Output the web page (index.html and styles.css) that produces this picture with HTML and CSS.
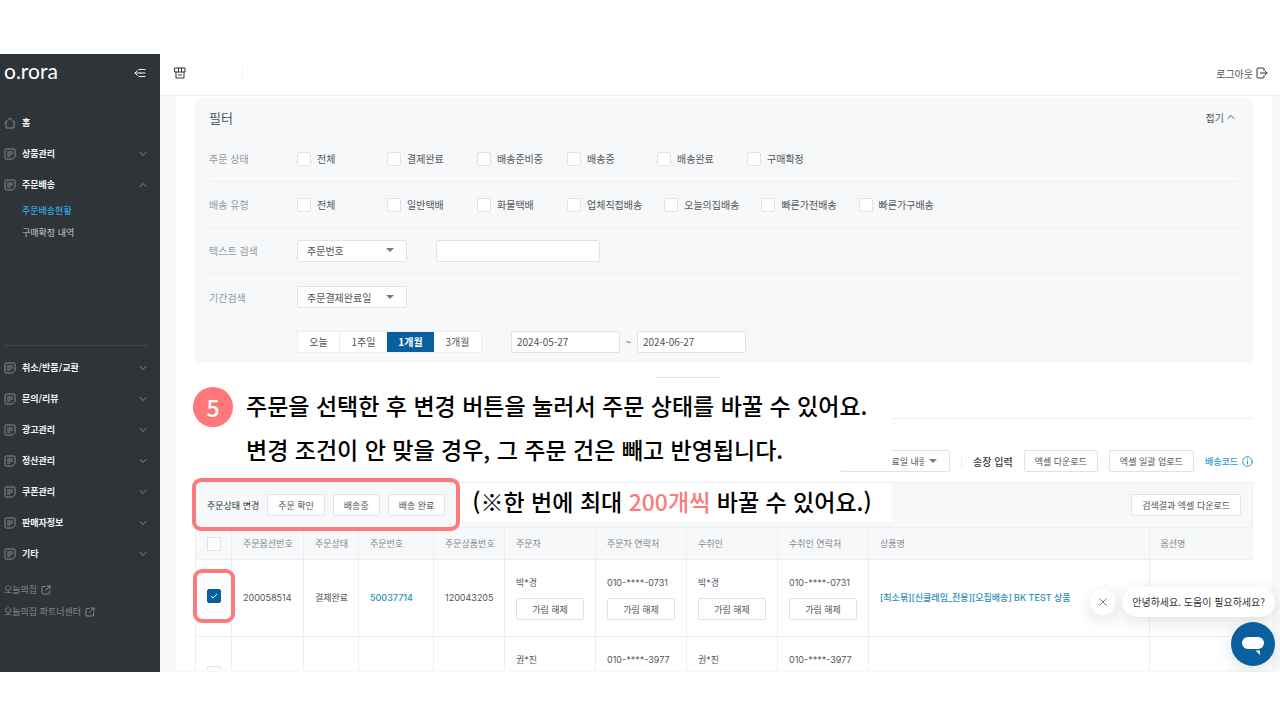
FILE: index.html
```html
<!DOCTYPE html>
<html lang="ko">

<head>
    <meta charset="UTF-8">
    <meta name="viewport" content="width=device-width, initial-scale=1.0">
    <title>주문배송현황</title>
    <link rel="stylesheet" href="styles.css">
</head>

<body>
    <!-- Shared icons -->
    <svg class="sprite" aria-hidden="true">
        <symbol id="doc" viewBox="0 0 12 12">
            <path d="M1 2a1 1 0 0 1 1-1h8a1 1 0 0 1 1 1v6.500L8.500 11H2a1 1 0 0 1-1-1zM3.500 4h5M3.500 6h5M3.500 8H6" />
        </symbol>
        <symbol id="down" viewBox="0 0 8 8">
            <path d="M1 2.500l3 3 3-3" />
        </symbol>
        <symbol id="up" viewBox="0 0 8 8">
            <path d="M1 5.500l3-3 3 3" />
        </symbol>
        <symbol id="external" viewBox="0 0 10 10">
            <path d="M4 1.500H2a1 1 0 0 0-1 1V8a1 1 0 0 0 1 1h5.500a1 1 0 0 0 1-1V6M6 1h3v3M9 1L4.500 5.500" />
        </symbol>
    </svg>

    <div class="app">
        <aside class="sidebar">
            <div class="brand">
                <a href="#" class="logo">o.rora</a>
                <button type="button" class="icon-btn" aria-label="메뉴 접기">
                    <svg class="icon" width="12" height="12" viewBox="0 0 12 12">
                        <path d="M5 2.500h6M6 6h5M5 9.500h6M6 6H1M3.500 3.500L1 6l2.500 2.500" />
                    </svg>
                </button>
            </div>
            <nav class="menu menu-main">
                <a href="#" class="menu-item">
                    <svg class="icon" width="12" height="12" viewBox="0 0 12 12">
                        <path d="M1 5.500L6 1l5 4.500M2 5v6h8V5" />
                    </svg>
                    <span>홈</span>
                </a>
                <a href="#" class="menu-item"><svg class="icon" width="12" height="12"><use href="#doc" /></svg><span>상품관리</span><svg class="icon arrow" width="8" height="8"><use href="#down" /></svg></a>
                <a href="#" class="menu-item"><svg class="icon" width="12" height="12"><use href="#doc" /></svg><span>주문배송</span><svg class="icon arrow" width="8" height="8"><use href="#up" /></svg></a>
                <a href="#" class="sub-item active">주문배송현황</a>
                <a href="#" class="sub-item">구매확정 내역</a>
            </nav>
            <nav class="menu menu-more">
                <a href="#" class="menu-item"><svg class="icon" width="12" height="12"><use href="#doc" /></svg><span>취소/반품/교환</span><svg class="icon arrow" width="8" height="8"><use href="#down" /></svg></a>
                <a href="#" class="menu-item"><svg class="icon" width="12" height="12"><use href="#doc" /></svg><span>문의/리뷰</span><svg class="icon arrow" width="8" height="8"><use href="#down" /></svg></a>
                <a href="#" class="menu-item"><svg class="icon" width="12" height="12"><use href="#doc" /></svg><span>광고관리</span><svg class="icon arrow" width="8" height="8"><use href="#down" /></svg></a>
                <a href="#" class="menu-item"><svg class="icon" width="12" height="12"><use href="#doc" /></svg><span>정산관리</span><svg class="icon arrow" width="8" height="8"><use href="#down" /></svg></a>
                <a href="#" class="menu-item"><svg class="icon" width="12" height="12"><use href="#doc" /></svg><span>쿠폰관리</span><svg class="icon arrow" width="8" height="8"><use href="#down" /></svg></a>
                <a href="#" class="menu-item"><svg class="icon" width="12" height="12"><use href="#doc" /></svg><span>판매자정보</span><svg class="icon arrow" width="8" height="8"><use href="#down" /></svg></a>
                <a href="#" class="menu-item"><svg class="icon" width="12" height="12"><use href="#doc" /></svg><span>기타</span><svg class="icon arrow" width="8" height="8"><use href="#down" /></svg></a>
            </nav>
            <div class="outer-links">
                <a href="#">오늘의집 <svg class="icon" width="10" height="10"><use href="#external" /></svg></a>
                <a href="#">오늘의집 파트너센터 <svg class="icon" width="10" height="10"><use href="#external" /></svg></a>
            </div>
        </aside>

        <div class="main">
            <header class="topbar">
                <div class="shop">
                    <svg class="icon" width="12" height="12" viewBox="0 0 12 12">
                        <path d="M1 1h10v4H1zM4.500 1v4M7.500 1v4M2 5v6h8V5M4.500 8h3" />
                    </svg>
                </div>
                <a href="#" class="logout">로그아웃
                    <svg class="icon" width="12" height="12" viewBox="0 0 12 12">
                        <path d="M8 3.500V2a1 1 0 0 0-1-1H2a1 1 0 0 0-1 1v8a1 1 0 0 0 1 1h5a1 1 0 0 0 1-1V8.500M4.500 6H11M9 4l2 2-2 2" />
                    </svg>
                </a>
            </header>

            <main class="content">
                <div class="card">
                    <form class="filter">
                        <div class="filter-head">
                            <h2>필터</h2>
                            <button type="button" class="fold">접기 <svg class="icon" width="8" height="8"><use href="#up" /></svg></button>
                        </div>
                        <div class="filter-row">
                            <span class="label">주문 상태</span>
                            <label class="check"><input type="checkbox">전체</label>
                            <label class="check"><input type="checkbox">결제완료</label>
                            <label class="check"><input type="checkbox">배송준비중</label>
                            <label class="check"><input type="checkbox">배송중</label>
                            <label class="check"><input type="checkbox">배송완료</label>
                            <label class="check"><input type="checkbox">구매확정</label>
                        </div>
                        <div class="filter-row">
                            <span class="label">배송 유형</span>
                            <label class="check"><input type="checkbox">전체</label>
                            <label class="check"><input type="checkbox">일반택배</label>
                            <label class="check"><input type="checkbox">화물택배</label>
                            <label class="check"><input type="checkbox">업체직접배송</label>
                            <label class="check"><input type="checkbox">오늘의집배송</label>
                            <label class="check"><input type="checkbox">빠른가전배송</label>
                            <label class="check"><input type="checkbox">빠른가구배송</label>
                        </div>
                        <div class="filter-row">
                            <label class="label" for="textType">텍스트 검색</label>
                            <select id="textType" class="select">
                                <option>주문번호</option>
                            </select>
                            <input type="text" class="field keyword" aria-label="검색어">
                        </div>
                        <div class="filter-row no-line">
                            <label class="label" for="dateType">기간검색</label>
                            <select id="dateType" class="select">
                                <option>주문결제완료일</option>
                            </select>
                        </div>
                        <div class="filter-row dates">
                            <div class="period">
                                <button type="button">오늘</button>
                                <button type="button">1주일</button>
                                <button type="button" class="on">1개월</button>
                                <button type="button">3개월</button>
                            </div>
                            <input type="text" class="field date" value="2024-05-27" aria-label="시작일">
                            <span class="tilde">~</span>
                            <input type="text" class="field date" value="2024-06-27" aria-label="종료일">
                        </div>
                    </form>

                    <div class="filter-end"><span class="short-line"></span></div>

                    <div class="actions">
                        <select class="select sort" aria-label="정렬">
                            <option>주문결제완료일 내림차순</option>
                        </select>
                        <span class="bar"></span>
                        <strong>송장 입력</strong>
                        <button type="button" class="btn">엑셀 다운로드</button>
                        <button type="button" class="btn">엑셀 일괄 업로드</button>
                        <a href="#" class="code">배송코드
                            <svg class="icon" width="11" height="11" viewBox="0 0 11 11">
                                <circle cx="5.500" cy="5.500" r="4.800" />
                                <path d="M5.500 5v3M5.500 2.800v.4" />
                            </svg>
                        </a>
                    </div>

                    <div class="toolbar">
                        <div class="status-change marked">
                            <span>주문상태 변경</span>
                            <button type="button" class="btn">주문 확인</button>
                            <button type="button" class="btn">배송중</button>
                            <button type="button" class="btn">배송 완료</button>
                        </div>
                        <p class="note">(※한 번에 최대 <em>200개씩</em> 바꿀 수 있어요.)</p>
                        <button type="button" class="btn result">검색결과 엑셀 다운로드</button>
                    </div>

                    <table class="orders">
                        <colgroup>
                            <col class="c-check">
                            <col class="c-option-no">
                            <col class="c-status">
                            <col class="c-order-no">
                            <col class="c-product-no">
                            <col class="c-person">
                            <col class="c-person">
                            <col class="c-person">
                            <col class="c-person">
                            <col>
                            <col class="c-option">
                        </colgroup>
                        <thead>
                            <tr>
                                <th class="pick"><input type="checkbox" aria-label="전체 선택"></th>
                                <th>주문옵션번호</th>
                                <th>주문상태</th>
                                <th>주문번호</th>
                                <th>주문상품번호</th>
                                <th>주문자</th>
                                <th>주문자 연락처</th>
                                <th>수취인</th>
                                <th>수취인 연락처</th>
                                <th>상품명</th>
                                <th>옵션명</th>
                            </tr>
                        </thead>
                        <tbody>
                            <tr>
                                <td class="pick"><span class="marked"><input type="checkbox" aria-label="200058514 선택" checked></span></td>
                                <td>200058514</td>
                                <td>결제완료</td>
                                <td><a href="#" class="order-no">50037714</a></td>
                                <td>120043205</td>
                                <td class="person">박*경<button type="button" class="btn unmask">가림 해제</button></td>
                                <td class="person">010-****-0731<button type="button" class="btn unmask">가림 해제</button></td>
                                <td class="person">박*경<button type="button" class="btn unmask">가림 해제</button></td>
                                <td class="person">010-****-0731<button type="button" class="btn unmask">가림 해제</button></td>
                                <td><a href="#">[최소묶][신클레임_전용][오집배송] BK TEST 상품</a></td>
                                <td></td>
                            </tr>
                            <tr>
                                <td class="pick"><input type="checkbox" aria-label="선택"></td>
                                <td></td>
                                <td></td>
                                <td></td>
                                <td></td>
                                <td class="person">권*진</td>
                                <td class="person">010-****-3977</td>
                                <td class="person">권*진</td>
                                <td class="person">010-****-3977</td>
                                <td></td>
                                <td></td>
                            </tr>
                        </tbody>
                    </table>

                    <!-- Guide text over the list -->
                    <div class="guide">
                        <span class="step">5</span>
                        <p>주문을 선택한 후 변경 버튼을 눌러서 주문 상태를 바꿀 수 있어요.<br>변경 조건이 안 맞을 경우, 그 주문 건은 빼고 반영됩니다.</p>
                    </div>
                </div>
            </main>
        </div>

        <!-- Chat helper -->
        <div class="chat">
            <div class="chat-line">
                <button type="button" class="chat-close" aria-label="닫기">
                    <svg class="icon" width="8" height="8" viewBox="0 0 10 10">
                        <path d="M1 1l8 8M9 1L1 9" />
                    </svg>
                </button>
                <p class="chat-text">안녕하세요. 도움이 필요하세요?</p>
            </div>
            <button type="button" class="chat-open" aria-label="상담하기">
                <svg width="24" height="20" viewBox="0 0 24 20">
                    <rect x="1" y="1" width="22" height="12" rx="6" fill="#fff" />
                    <path d="M14.500 14.500h4.500v4.500z" fill="#fff" />
                </svg>
            </button>
        </div>
    </div>
</body>

</html>
```

FILE: styles.css
```css
* {
    box-sizing: border-box;
}

body {
    margin: 0;
    padding: 54px 0 48px;
    background-color: #fff;
    font-family: "Noto Sans CJK KR", sans-serif;
    font-size: 10px;
    color: #50565b;
}

button,
input,
select {
    font-family: inherit;
    font-size: inherit;
    color: inherit;
}

button {
    cursor: pointer;
}

a {
    color: inherit;
    text-decoration: none;
}

h2,
p {
    margin: 0;
}

.sprite {
    display: none;
}

.icon {
    fill: none;
    stroke: currentColor;
    stroke-width: 1;
    stroke-linecap: round;
    stroke-linejoin: round;
    flex-shrink: 0;
}

.app {
    position: relative;
    display: flex;
    height: calc(100vh - 102px);
    overflow: hidden;
}

/* Sidebar */
.sidebar {
    width: 160px;
    flex-shrink: 0;
    background-color: #2f3438;
    color: #f2f3f4;
    font-size: 9px;
}

.brand {
    display: flex;
    align-items: center;
    justify-content: space-between;
    height: 53px;
    padding: 0 14px 15px 4px;
}

.logo {
    padding-bottom: 4px;
    font-family: Lato, sans-serif;
    font-size: 21px;
    line-height: 24px;
    color: #fff;
}

.icon-btn {
    display: flex;
    padding: 0;
    border: none;
    background: none;
}

.menu-main {
    min-height: 238px;
}

.menu-item {
    display: flex;
    align-items: center;
    gap: 6px;
    height: 31px;
    padding: 0 13px 0 4px;
    font-weight: bold;
}

.menu-item .icon {
    color: #858c92;
}

.menu-item .arrow {
    margin-left: auto;
}

.sub-item {
    display: block;
    padding-left: 22px;
    line-height: 22px;
    color: #c2c8cc;
}

.sub-item.active {
    color: #2ba9df;
    font-weight: 500;
}

.menu-more {
    margin-right: 13px;
    margin-left: 4px;
    padding-top: 6px;
    border-top: 1px solid #41474b;
}

.menu-more .menu-item {
    padding: 0;
}

.outer-links {
    display: flex;
    flex-direction: column;
    padding: 10px 4px;
    line-height: 22px;
    color: #828c94;
}

.outer-links a {
    display: flex;
    align-items: center;
    gap: 4px;
}

/* Top bar */
.main {
    flex: 1;
    min-width: 0;
    display: flex;
    flex-direction: column;
}

.topbar {
    display: flex;
    align-items: center;
    justify-content: space-between;
    flex-shrink: 0;
    height: 42px;
    padding: 0 12px 3px 14px;
    border-bottom: 1px solid #eaedef;
}

.shop {
    display: flex;
    width: 69px;
    color: #2f3438;
    border-right: 1px solid #f0f2f3;
}

.logout {
    display: flex;
    align-items: center;
    gap: 3px;
}

.logout .icon {
    color: #2f3438;
}

/* Page card */
.content {
    flex: 1;
    min-height: 0;
    padding: 0 8px 2px 16px;
    background-color: #f7f9fa;
}

.card {
    position: relative;
    height: 100%;
    padding: 2px 19px 0;
    overflow: hidden;
    background-color: #fff;
    border-radius: 0 0 4px 4px;
}

/* Filter */
.filter {
    padding: 0 14px;
    background-color: #f7f8fa;
    border-radius: 4px;
}

.filter-head {
    display: flex;
    align-items: center;
    justify-content: space-between;
    height: 38px;
    padding-right: 4px;
}

.filter-head h2 {
    font-size: 13px;
    font-weight: normal;
}

.fold {
    display: flex;
    align-items: center;
    gap: 3px;
    padding: 0;
    border: none;
    background: none;
}

.filter-row {
    display: flex;
    align-items: center;
    height: 46px;
    border-bottom: 1px solid #eceff1;
}

.filter-row.no-line {
    border-bottom: none;
}

.filter-row.dates {
    height: 43px;
    padding-left: 88px;
    border-bottom: none;
}

.label {
    width: 88px;
    flex-shrink: 0;
    color: #929aa1;
}

.check {
    display: flex;
    align-items: center;
    gap: 6px;
    min-width: 90px;
    padding-right: 22px;
}

input[type="checkbox"] {
    appearance: none;
    width: 14px;
    height: 14px;
    margin: 0;
    background-color: #fff;
    border: 1px solid #dfe3e6;
    border-radius: 2px;
}

input[type="checkbox"]:checked {
    background: #0a5f9e url("data:image/svg+xml,%3Csvg xmlns='http://www.w3.org/2000/svg' viewBox='0 0 12 12'%3E%3Cpath d='M3 6l2 2 4-4' fill='none' stroke='white'/%3E%3C/svg%3E") center / 12px no-repeat;
    border-color: #0a5f9e;
}

.select,
.field {
    height: 22px;
    padding: 0 9px;
    background-color: #fff;
    border: 1px solid #dfe3e6;
    border-radius: 2px;
}

.select {
    appearance: none;
    width: 110px;
    padding-right: 25px;
    background-image: url("data:image/svg+xml,%3Csvg xmlns='http://www.w3.org/2000/svg' viewBox='0 0 8 5'%3E%3Cpath d='M0 0h8L4 4z' fill='%23757d84'/%3E%3C/svg%3E");
    background-repeat: no-repeat;
    background-position: right 12px center;
    background-size: 8px 5px;
}

.keyword {
    width: 164px;
    margin-left: 29px;
}

.period {
    display: flex;
    margin-right: 29px;
    border: 1px solid #eceff1;
    border-radius: 2px;
}

.period button {
    width: 47px;
    height: 20px;
    padding: 0;
    background-color: #fff;
    border: none;
}

.period button:first-child {
    width: 42px;
    border-right: 1px solid #eceff1;
}

.period .on {
    background-color: #0a5f9e;
    color: #fff;
    font-weight: bold;
}

.date {
    width: 109px;
    padding: 0 5px;
}

.tilde {
    width: 17px;
    text-align: center;
}

.filter-end {
    display: flex;
    justify-content: center;
    height: 55px;
    padding: 14px 72px 0 0;
}

.short-line {
    width: 65px;
    height: 1px;
    background-color: #dfe3e6;
}

/* Invoice actions */
.actions {
    display: flex;
    align-items: center;
    justify-content: flex-end;
    gap: 11px;
    padding: 31px 0 10px;
    border-top: 1px solid #eceff1;
}

.actions strong {
    font-weight: 500;
    color: #2f3438;
}

.sort {
    font-size: 9px;
}

.bar {
    width: 1px;
    height: 14px;
    background-color: #eceff1;
}

.btn {
    height: 22px;
    padding: 0 10px;
    background-color: #fff;
    border: 1px solid #dfe3e6;
    border-radius: 2px;
    font-size: 9px;
    white-space: nowrap;
}

.code {
    display: flex;
    align-items: center;
    gap: 4px;
    font-size: 9px;
    font-weight: 500;
    color: #2c9cc6;
}

/* Order status toolbar */
.toolbar {
    display: flex;
    align-items: center;
    height: 45px;
    padding: 0 11px;
    background-color: #f7f8fa;
    border: 1px solid #eceff1;
    border-bottom: none;
    font-size: 9px;
}

.status-change {
    display: flex;
    align-items: center;
    gap: 8px;
    color: #2f3438;
}

.status-change .btn {
    color: #50565b;
}

/* Red frame around the part that the guide explains */
.marked {
    position: relative;
}

.marked::after {
    content: "";
    position: absolute;
    inset: -20px -14px;
    border: 4px solid #fb7b7d;
    border-radius: 9px;
    pointer-events: none;
}

.status-change.marked::after {
    inset: -16px -15px -15px;
}

.note,
.guide {
    background-color: #fff;
    font-size: 23px;
    font-weight: 500;
    color: #000;
    white-space: nowrap;
}

.note {
    align-self: flex-start;
    height: 39px;
    margin-left: 15px;
    padding: 0 20px 0 12px;
    line-height: 36px;
}

.note em {
    font-style: normal;
    color: #fb7b7d;
}

.result {
    margin-left: auto;
}

/* Order table */
.orders {
    width: 100%;
    table-layout: fixed;
    border-collapse: collapse;
    font-family: Inter, "Noto Sans CJK KR", sans-serif;
    font-size: 9px;
}

.c-check {
    width: 36px;
}

.c-option-no {
    width: 72px;
}

.c-status {
    width: 55px;
}

.c-order-no {
    width: 75px;
}

.c-product-no {
    width: 71px;
}

.c-person {
    width: 91px;
}

.c-option {
    width: 104px;
}

.orders th,
.orders td {
    padding: 0 0 0 11px;
    border: 1px solid #eceff1;
    border-right: none;
    text-align: left;
    white-space: nowrap;
}

.orders th {
    height: 32px;
    background-color: #f7f8fa;
    font-weight: normal;
    color: #7d868d;
}

.orders td {
    height: 77px;
    line-height: 14px;
}

.orders .person {
    padding: 16px 11px 0;
    vertical-align: top;
}

.orders .pick {
    padding: 0;
}

.orders td.pick {
    padding-bottom: 4px;
}

.pick input {
    display: block;
    margin: 0 auto;
}

.pick .marked {
    display: block;
    width: 14px;
    margin: 0 auto;
}

.orders a {
    color: #2c8fb8;
    font-weight: 500;
}

.unmask {
    display: block;
    width: 100%;
    margin-top: 8px;
}

/* Guide */
.guide {
    position: absolute;
    top: 282px;
    left: 17px;
    display: flex;
    gap: 13px;
    width: 699px;
    height: 92px;
    padding-top: 5px;
    line-height: 44px;
}

.step {
    width: 40px;
    height: 40px;
    flex-shrink: 0;
    margin-top: 4px;
    border-radius: 50%;
    background-color: #ff7779;
    color: #fff;
    line-height: 40px;
    text-align: center;
}

/* Chat */
.chat {
    position: absolute;
    right: 5px;
    bottom: 6px;
    display: flex;
    flex-direction: column;
    align-items: flex-end;
    gap: 5px;
}

.chat-line {
    display: flex;
    align-items: center;
    gap: 6px;
}

.chat-close {
    display: flex;
    align-items: center;
    justify-content: center;
    width: 26px;
    height: 26px;
    padding: 0;
    background-color: #fff;
    border: none;
    border-radius: 50%;
    box-shadow: 0 4px 16px rgba(47, 52, 56, 0.15);
}

.chat-text {
    padding: 0 10px;
    background-color: #fff;
    border-radius: 15px;
    box-shadow: 0 4px 16px rgba(47, 52, 56, 0.15);
    line-height: 30px;
    color: #2f3438;
}

.chat-open {
    display: flex;
    align-items: center;
    justify-content: center;
    width: 44px;
    height: 44px;
    padding: 4px 0 0;
    background-color: #0a5f9e;
    border: none;
    border-radius: 50%;
    box-shadow: 0 4px 16px rgba(47, 52, 56, 0.15);
}
```
